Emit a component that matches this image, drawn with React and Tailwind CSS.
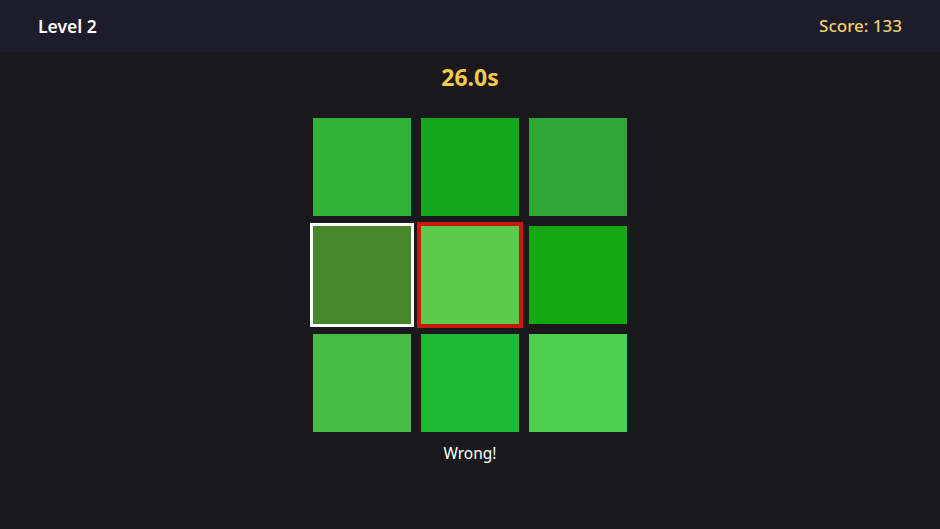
const tiles = [
  { color: 'bg-[#30b236]' },
  { color: 'bg-[#16a61d]' },
  { color: 'bg-[#2ea637]' },
  { color: 'bg-[#47862b]', ring: 'outline-3 outline-white' },
  { color: 'bg-[#5ccb4c]', ring: 'outline-4 outline-[#c8190f]' },
  { color: 'bg-[#15a711]' },
  { color: 'bg-[#48bb45]' },
  { color: 'bg-[#1fb832]' },
  { color: 'bg-[#4acf4e]' },
];

export default function App() {
  return (
    <div className="min-h-screen bg-[#18181d] font-['Noto_Sans','Lato',sans-serif]">
      <header className="h-[52px] bg-[#1c1c2a] flex items-center justify-between px-[38px]">
        <span className="text-white text-[17.5px] font-semibold">Level 2</span>
        <span className="text-[#f3cf6c] text-[17px] font-medium">Score: 133</span>
      </header>

      <main className="flex flex-col items-center">
        <div className="mt-[10px] h-[30px] leading-[30px] text-[23px] font-bold text-[#f6c84c]">26.0s</div>
        <div className="mt-[26px] grid grid-cols-[repeat(3,98px)] grid-rows-[repeat(3,98px)] gap-[10px]">
          {tiles.map((t, i) => (
            <div key={i} className={`${t.color} ${t.ring || ''}`} />
          ))}
        </div>
        <div className="mt-[11px] h-[20px] leading-[20px] text-[15.5px] text-white">Wrong!</div>
      </main>
    </div>
  );
}
